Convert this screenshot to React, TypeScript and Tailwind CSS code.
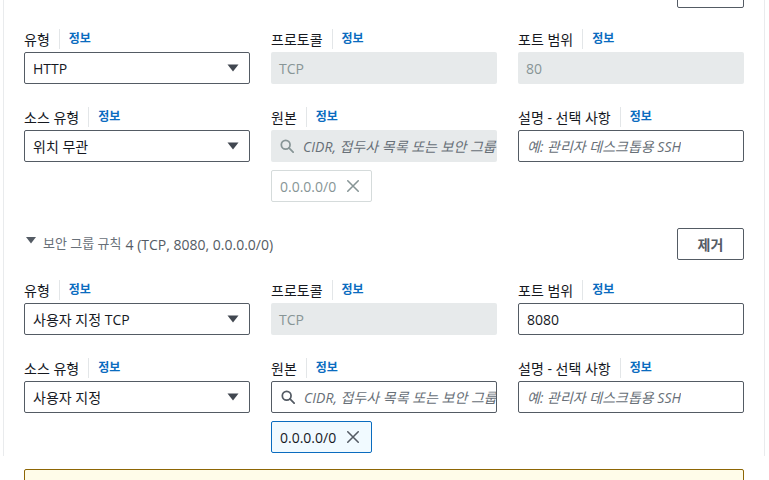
import React from 'react';

const FONT = { fontFamily: '"Open Sans", "Noto Sans CJK KR", sans-serif' };

function Caret() {
  return (
    <svg width="12" height="8" viewBox="0 0 12 8" className="shrink-0">
      <path d="M0.5 0.5 H11.5 L6 7.5 Z" fill="#414750" />
    </svg>
  );
}

function SearchIcon({ color }: { color: string }) {
  return (
    <svg width="14" height="14" viewBox="0 0 16 16" fill="none" stroke={color} strokeWidth="2" className="shrink-0">
      <circle cx="6.5" cy="6.5" r="5" />
      <path d="M10.2 10.2 L15 15" strokeLinecap="round" />
    </svg>
  );
}

function XIcon({ color }: { color: string }) {
  return (
    <svg width="14" height="14" viewBox="0 0 16 16" fill="none" stroke={color} strokeWidth="1.8">
      <path d="M2 2 L14 14 M14 2 L2 14" strokeLinecap="round" />
    </svg>
  );
}

function Label({ text }: { text: string }) {
  return (
    <div className="pt-[2px] flex items-center h-[22px] text-[14px] text-[#16191f]">
      <span>{text}</span>
      <span className="mx-[9px] w-px h-[20px] bg-[#e3e6e8]" />
      <span className="text-[12px] font-bold text-[#0a6cbf]">정보</span>
    </div>
  );
}

function Select({ value }: { value: string }) {
  return (
    <div className="mt-[3px] h-[32px] border border-[#545b64] rounded-[2px] flex items-center justify-between pl-[8px] pr-[10px] text-[14px] text-[#16191f] bg-white">
      <span>{value}</span>
      <Caret />
    </div>
  );
}

function Disabled({ value }: { value: string }) {
  return (
    <div className="mt-[3px] h-[32px] rounded-[2px] bg-[#e7eaeb] flex items-center px-[8px] text-[14px] text-[#879596]">
      {value}
    </div>
  );
}

function TextInput({ value, placeholder }: { value?: string; placeholder?: string }) {
  return (
    <div className="mt-[3px] h-[32px] border border-[#545b64] rounded-[2px] flex items-center px-[8px] text-[14px] bg-white">
      {value ? (
        <span className="text-[#16191f]">{value}</span>
      ) : (
        <span className="italic text-[#687078] whitespace-nowrap overflow-hidden">{placeholder}</span>
      )}
    </div>
  );
}

function SourceInput({ disabled }: { disabled: boolean }) {
  return (
    <>
      <div
        className={`mt-[3px] h-[32px] rounded-[2px] flex items-center pl-[9px] pr-[6px] gap-[9px] text-[14px] overflow-hidden ${
          disabled ? 'bg-[#e7eaeb]' : 'bg-white border border-[#545b64]'
        }`}
      >
        <SearchIcon color={disabled ? '#879596' : '#545b64'} />
        <span className="italic text-[#687078] whitespace-nowrap">CIDR, 접두사 목록 또는 보안 그룹</span>
      </div>
      <div
        className={`mt-[8px] w-[101px] h-[32px] rounded-[2px] border flex items-center pl-[8px] gap-[10px] text-[14px] ${
          disabled
            ? 'border-[#d5dbdb] bg-white text-[#879596]'
            : 'border-[#0a6cbf] bg-[#f1faff] text-[#16191f]'
        }`}
      >
        <span>0.0.0.0/0</span>
        <XIcon color={disabled ? '#879596' : '#545b64'} />
      </div>
    </>
  );
}

function Rule({
  type,
  port,
  portDisabled,
  source,
  sourceDisabled,
}: {
  type: string;
  port: string;
  portDisabled: boolean;
  source: string;
  sourceDisabled: boolean;
}) {
  return (
    <div className="flex flex-col">
      <div className="grid grid-cols-3 gap-x-[21px]">
        <div>
          <Label text="유형" />
          <Select value={type} />
        </div>
        <div>
          <Label text="프로토콜" />
          <Disabled value="TCP" />
        </div>
        <div>
          <Label text="포트 범위" />
          {portDisabled ? <Disabled value={port} /> : <TextInput value={port} />}
        </div>
      </div>
      <div className="grid grid-cols-3 gap-x-[21px] mt-[21px]">
        <div>
          <Label text="소스 유형" />
          <Select value={source} />
        </div>
        <div>
          <Label text="원본" />
          <SourceInput disabled={sourceDisabled} />
        </div>
        <div>
          <Label text="설명 - 선택 사항" />
          <TextInput placeholder="예: 관리자 데스크톱용 SSH" />
        </div>
      </div>
    </div>
  );
}

function RemoveButton({ label = '제거' }: { label?: string }) {
  return (
    <button className="w-[67px] h-[32px] border border-[#545b64] rounded-[2px] bg-white text-[14px] font-bold text-[#545b64]">
      {label}
    </button>
  );
}

export default function App() {
  return (
    <div className="w-[769px] h-[480px] overflow-hidden bg-white" style={FONT}>
      <div className="ml-[3px] w-[762px] h-[480px] border-x border-[#e9ebed] pl-[20px] pr-[20px]">
        {/* previous rule's remove button, scrolled mostly out of view */}
        <div className="flex justify-end -mt-[24px]">
          <RemoveButton label="" />
        </div>
        <div className="mt-[19px]">
          <Rule type="HTTP" port="80" portDisabled source="위치 무관" sourceDisabled />
        </div>
        <div className="mt-[26px] flex items-center justify-between">
          <div className="flex items-center text-[14px] text-[#545b64]">
            <svg width="10" height="7" viewBox="0 0 10 7" className="ml-[2px] -mt-[8px] mr-[7px]">
              <path d="M0 0 H10 L5 6.5 Z" fill="#545b64" />
            </svg>
            <span className="text-[#687078] text-[13px]">보안 그룹 규칙</span>
            <span className="ml-[4px]">4 (TCP, 8080, 0.0.0.0/0)</span>
          </div>
          <RemoveButton />
        </div>
        <div className="mt-[18px]">
          <Rule type="사용자 지정 TCP" port="8080" portDisabled={false} source="사용자 지정" sourceDisabled={false} />
        </div>
        <div className="mt-[16px] h-[40px] border border-[#8d6605] rounded-t-[2px] bg-[#fffce9]" />
      </div>
    </div>
  );
}
